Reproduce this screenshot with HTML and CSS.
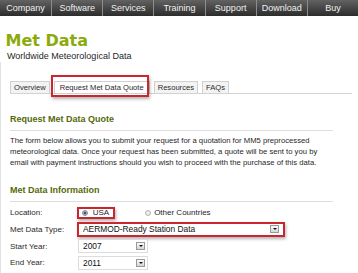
FILE: index.html
```html
<!DOCTYPE html>
<html>
<head>
<meta charset="utf-8">
<title>Met Data</title>
<link rel="stylesheet" href="styles.css">
</head>
<body>
<nav class="topnav">
  <a class="nav-item">Company</a>
  <a class="nav-item">Software</a>
  <a class="nav-item">Services</a>
  <a class="nav-item">Training</a>
  <a class="nav-item">Support</a>
  <a class="nav-item">Download</a>
  <a class="nav-item">Buy</a>
</nav>
<header class="masthead">
  <h1 class="title">Met Data</h1>
  <p class="subtitle">Worldwide Meteorological Data</p>
</header>
<main class="content">
  <ul class="tabs">
    <li class="tab">Overview</li>
    <li class="tab tab-active"><span class="tab-callout"></span>Request Met Data Quote</li>
    <li class="tab">Resources</li>
    <li class="tab">FAQs</li>
  </ul>
  <h2 class="section-title section-first">Request Met Data Quote</h2>
  <p class="intro">The form below allows you to submit your request for a quotation for MM5 preprocessed meteorological data. Once your request has been submitted, a quote will be sent to you by email with payment instructions should you wish to proceed with the purchase of this data.</p>
  <h2 class="section-title section-second">Met Data Information</h2>
  <div class="form">
    <div class="label">Location:</div>
    <div class="field">
      <span class="radio-option callout"><span class="radio radio-checked"></span>USA</span>
      <span class="radio-option radio-other"><span class="radio"></span>Other Countries</span>
    </div>
    <div class="label">Met Data Type:</div>
    <div class="field">
      <div class="select select-wide callout"><span class="select-text">AERMOD-Ready Station Data</span><span class="select-btn"></span></div>
    </div>
    <div class="label">Start Year:</div>
    <div class="field">
      <div class="select select-year"><span class="select-text">2007</span><span class="select-btn"></span></div>
    </div>
    <div class="label">End Year:</div>
    <div class="field">
      <div class="select select-year"><span class="select-text">2011</span><span class="select-btn"></span></div>
    </div>
  </div>
</main>
</body>
</html>
```

FILE: styles.css
```css
* { box-sizing: border-box; }

html, body {
  margin: 0;
  padding: 0;
  background: #ffffff;
}

body {
  font-family: "Liberation Sans", Arial, sans-serif;
  color: #1f1f1f;
  width: 358px;
  height: 273px;
  overflow: hidden;
}

/* top navigation */
.topnav {
  display: grid;
  grid-template-columns: repeat(7, 1fr);
  height: 16px;
  background: linear-gradient(#626262, #2c2c2c);
}

.nav-item {
  text-align: center;
  color: #f2f2f2;
  font-size: 9px;
  line-height: 16px;
  border-left: 1px solid #8c8c8c;
}

.nav-item:first-child { border-left: none; }

/* masthead */
.masthead {
  padding: 15.5px 0 0 7px;
}

.title {
  margin: 0 0 0 -1.5px;
  font-family: "DejaVu Sans", Verdana, sans-serif;
  font-weight: bold;
  font-size: 16px;
  line-height: 18px;
  color: #8aab0b;
}

.subtitle {
  margin: 1px 0 0;
  font-size: 9px;
  line-height: 11px;
  color: #1f1f1f;
}

/* content */
.content {
  border-left: 1px solid #e2e2e2;
  padding: 19.5px 6px 0 9px;
  height: 212px;
}

.tabs {
  display: flex;
  gap: 4px;
  list-style: none;
  margin: 0;
  padding: 0;
  border-bottom: 1px solid #d2d2d2;
}

.tab {
  position: relative;
  font-size: 7.6px;
  line-height: 11px;
  padding: 0 3px;
  border: 1px solid #d0d0d0;
  border-bottom: none;
  background: #f3f3f3;
  color: #2a2a2a;
}

.tab-active {
  background: #ffffff;
  padding: 0 5px;
}

.tab-callout {
  position: absolute;
  left: -4px;
  right: 0;
  top: -7px;
  bottom: -4px;
  border: 2px solid #c9262d;
  box-shadow: 1px 2px 3px rgba(0, 0, 0, 0.3);
}

.section-title {
  margin: 0 19px 0 0;
  font-size: 9px;
  line-height: 11px;
  font-weight: bold;
  color: #56690c;
  padding-bottom: 4.5px;
  border-bottom: 1px solid #dedede;
}

.section-first { margin-top: 20.4px; }
.section-second { margin-top: 17.1px; }

.intro {
  margin: 4.3px 19px 0 0;
  font-size: 7.7px;
  line-height: 11px;
  color: #1f1f1f;
}

/* form */
.form {
  display: grid;
  grid-template-columns: 68px 1fr;
  grid-auto-rows: 16.7px;
  margin-top: 2.5px;
}

.label {
  align-self: center;
  font-size: 8px;
  color: #2a2a2a;
}

.field {
  display: flex;
  align-items: center;
}

.callout {
  border: 2px solid #c9262d;
  box-shadow: 1px 2px 3px rgba(0, 0, 0, 0.3);
}

.radio-option {
  display: flex;
  align-items: center;
  font-size: 8px;
  color: #1f1f1f;
}

.radio-option.callout {
  margin-left: -1px;
  height: 12px;
  padding: 0 4px 0 3px;
}

.radio-other {
  margin-left: 30px;
}

.radio {
  width: 6px;
  height: 6px;
  border-radius: 50%;
  border: 1px solid #b4b4b4;
  background: radial-gradient(circle, #f6f6f6 0, #dcdcdc 100%);
  margin-right: 3px;
}

.radio-checked {
  margin-right: 4.7px;
  border-color: #8a8a8a;
  background: radial-gradient(circle, #1f4f7a 0, #2f6494 1.3px, #e4e4e4 1.8px, #d2d2d2 100%);
}

.select {
  display: flex;
  align-items: center;
  justify-content: space-between;
  background: #fff;
  font-size: 8.4px;
  color: #111;
}

.select-wide {
  margin-left: -1px;
  width: 208px;
  height: 15px;
  padding: 0 4px 0 4px;
}

.select-year {
  width: 70px;
  height: 14px;
  border: 1px solid #dcdcdc;
  padding: 0 2px 0 4px;
}

.select-btn {
  position: relative;
  width: 9px;
  height: 8px;
  border: 1px solid #999;
  background: linear-gradient(#fbfbfb, #d6d6d6);
}

.select-btn::after {
  content: "";
  position: absolute;
  left: 1.5px;
  top: 2px;
  border-left: 2.5px solid transparent;
  border-right: 2.5px solid transparent;
  border-top: 2.5px solid #111;
}
```
